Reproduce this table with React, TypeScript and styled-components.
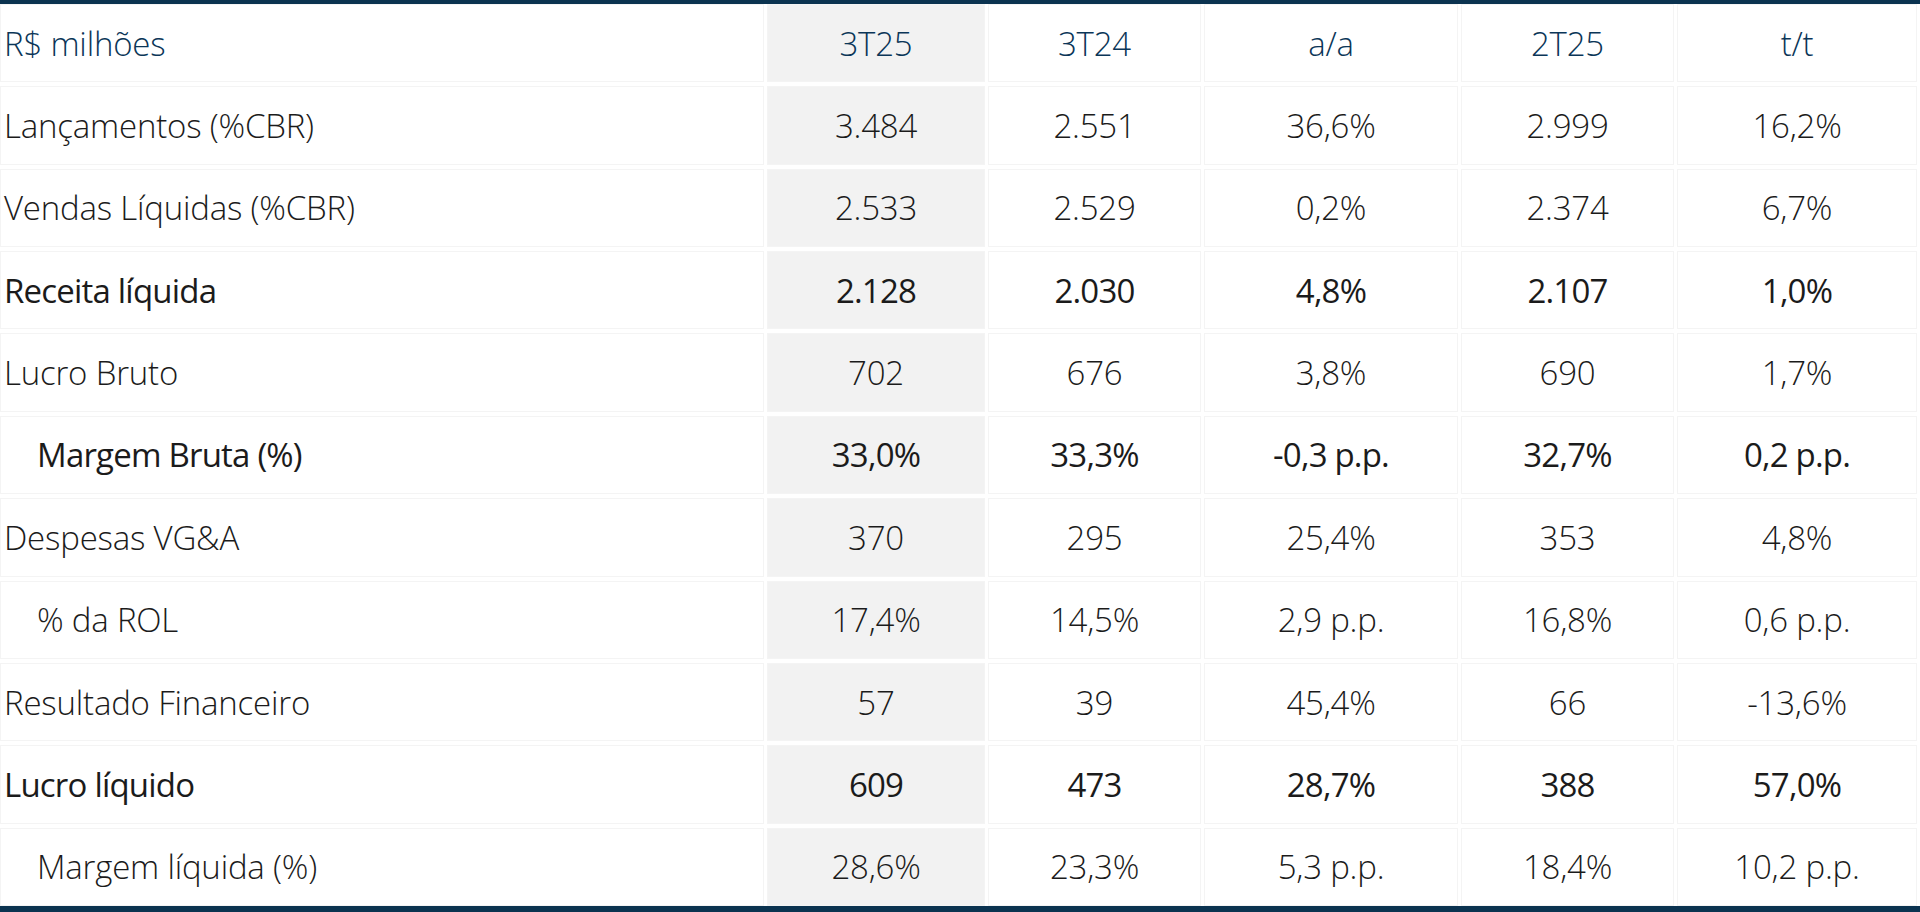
import React from "react";
import styled, { createGlobalStyle } from "styled-components";

interface IRow {
  label: string;
  values: string[];
  strong?: boolean;
  indent?: boolean;
}

const headers = ["3T25", "3T24", "a/a", "2T25", "t/t"];

const rows: IRow[] = [
  { label: "Lançamentos (%CBR)", values: ["3.484", "2.551", "36,6%", "2.999", "16,2%"] },
  { label: "Vendas Líquidas (%CBR)", values: ["2.533", "2.529", "0,2%", "2.374", "6,7%"] },
  { label: "Receita líquida", values: ["2.128", "2.030", "4,8%", "2.107", "1,0%"], strong: true },
  { label: "Lucro Bruto", values: ["702", "676", "3,8%", "690", "1,7%"] },
  { label: "Margem Bruta (%)", values: ["33,0%", "33,3%", "-0,3 p.p.", "32,7%", "0,2 p.p."], strong: true, indent: true },
  { label: "Despesas VG&A", values: ["370", "295", "25,4%", "353", "4,8%"] },
  { label: "% da ROL", values: ["17,4%", "14,5%", "2,9 p.p.", "16,8%", "0,6 p.p."], indent: true },
  { label: "Resultado Financeiro", values: ["57", "39", "45,4%", "66", "-13,6%"] },
  { label: "Lucro líquido", values: ["609", "473", "28,7%", "388", "57,0%"], strong: true },
  { label: "Margem líquida (%)", values: ["28,6%", "23,3%", "5,3 p.p.", "18,4%", "10,2 p.p."], indent: true },
];

const App: React.FC = () => {
  return (
    <>
      <GlobalStyle />
      <Table>
        <LabelCell head>R$ milhões</LabelCell>
        {headers.map((h, i) => (
          <ValueCell key={h} head highlight={i === 0}>
            {h}
          </ValueCell>
        ))}
        {rows.map((row) => (
          <React.Fragment key={row.label}>
            <LabelCell strong={row.strong} indent={row.indent}>
              {row.label}
            </LabelCell>
            {row.values.map((v, i) => (
              <ValueCell key={i} strong={row.strong} highlight={i === 0}>
                {v}
              </ValueCell>
            ))}
          </React.Fragment>
        ))}
      </Table>
    </>
  );
};

export default App;

// Styled

const GlobalStyle = createGlobalStyle`
  html, body {
    margin: 0;
    padding: 0;
    background: #ffffff;
  }
  body {
    font-family: "Open Sans", "Noto Sans", sans-serif;
  }
`;

interface ICellProps {
  head?: boolean;
  strong?: boolean;
  indent?: boolean;
  highlight?: boolean;
}

const Table = styled.div`
  box-sizing: border-box;
  width: 1920px;
  height: 912px;
  display: grid;
  grid-template-columns: 764px 218px 213px 254px 213px 1fr;
  grid-template-rows: repeat(11, 1fr);
  gap: 4px 3px;
  padding-right: 3px;
  border-top: 4px solid #0b3350;
  border-bottom: 6px solid #0b3350;
`;

const Cell = styled.div<ICellProps>`
  box-sizing: border-box;
  display: flex;
  align-items: center;
  border: 1px solid #f4f4f4;
  font-size: 33px;
  font-weight: ${({ strong }) => (strong ? 500 : 300)};
  letter-spacing: ${({ strong }) => (strong ? "-0.8px" : "-0.2px")};
  color: ${({ head }) => (head ? "#0b3658" : "#1b1b1b")};
  white-space: nowrap;
`;

const LabelCell = styled(Cell)`
  padding-left: ${({ indent }) => (indent ? "36px" : "3px")};
`;

const ValueCell = styled(Cell)`
  justify-content: center;
  background: ${({ highlight }) => (highlight ? "#f2f2f2" : "#ffffff")};
`;
